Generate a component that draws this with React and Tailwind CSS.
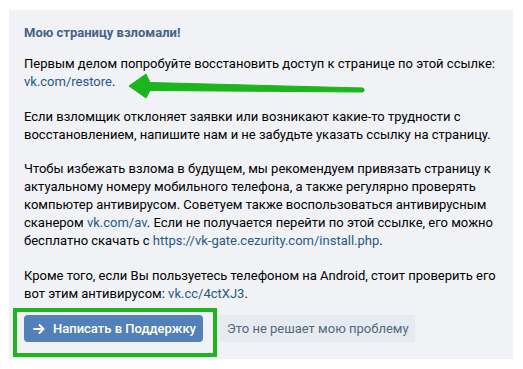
export default function App() {
  const link = 'text-[#2a5885]'
  return (
    <div className="relative w-[523px] h-[369px] bg-white" style={{ fontFamily: 'Roboto, "Open Sans", Arial, sans-serif' }}>
      <div className="absolute left-[9px] top-[10px] w-[504px] h-[349px] bg-[#f0f2f5]" />
      <div className="relative pl-[24px] pt-[24px] text-[13px] leading-[18px] text-[#000]">
        {/* Title */}
        <div className="font-bold text-[#4a6283]">Мою страницу взломали!</div>

        <p className="mt-[13px]">
          Первым делом попробуйте восстановить доступ к странице по этой ссылке:
          <br />
          <span className={link}>vk.com/restore</span>.
        </p>

        <p className="mt-[17px]">
          Если взломщик отклоняет заявки или возникают какие-то трудности с
          <br />
          восстановлением, напишите нам и не забудьте указать ссылку на страницу.
        </p>

        <p className="mt-[16px]">
          Чтобы избежать взлома в будущем, мы рекомендуем привязать страницу к
          <br />
          актуальному номеру мобильного телефона, а также регулярно проверять
          <br />
          компьютер антивирусом. Советуем также воспользоваться антивирусным
          <br />
          сканером <span className={link}>vk.com/av</span>. Если не получается перейти по этой ссылке, его можно
          <br />
          бесплатно скачать с <span className={link}>https://vk-gate.cezurity.com/install.php</span>.
        </p>

        <p className="mt-[17px]">
          Кроме того, если Вы пользуетесь телефоном на Android, стоит проверить его
          <br />
          вот этим антивирусом: <span className={link}>vk.cc/4ctXJ3</span>.
        </p>

        {/* Actions */}
        <div className="mt-[12px] flex items-center gap-[15px]">
          <button className="h-[27px] w-[179px] rounded-[4px] bg-[#5181b8] text-white text-[13px] font-medium flex items-center pl-[9px] gap-[8px]">
            <svg width="12" height="10" viewBox="0 0 12 10" fill="none" stroke="white" strokeWidth="1.8" strokeLinecap="round" strokeLinejoin="round">
              <path d="M1 5h9.5M6.5 1l4 4-4 4" />
            </svg>
            Написать в Поддержку
          </button>
          <button className="h-[27px] w-[197px] bg-[#e5ebf1] text-[#55677d] text-[13px] flex items-center pl-[9px]">
            Это не решает мою проблему
          </button>
        </div>
      </div>

      {/* green highlight box */}
      <div className="absolute left-[13px] top-[308px] w-[204px] h-[49px] border-[4px] border-[#1fb51f]" />

      {/* green arrow */}
      <svg className="absolute left-[120px] top-[70px]" width="250" height="32" viewBox="0 0 250 32">
        <path d="M9 16 L26 4 L30 12.5 L243 18 Q245.5 20 243 22 L30 20.5 L26 28 Z" fill="#1db51d" stroke="#1db51d" strokeWidth="1" strokeLinejoin="round" />
      </svg>
    </div>
  )
}
